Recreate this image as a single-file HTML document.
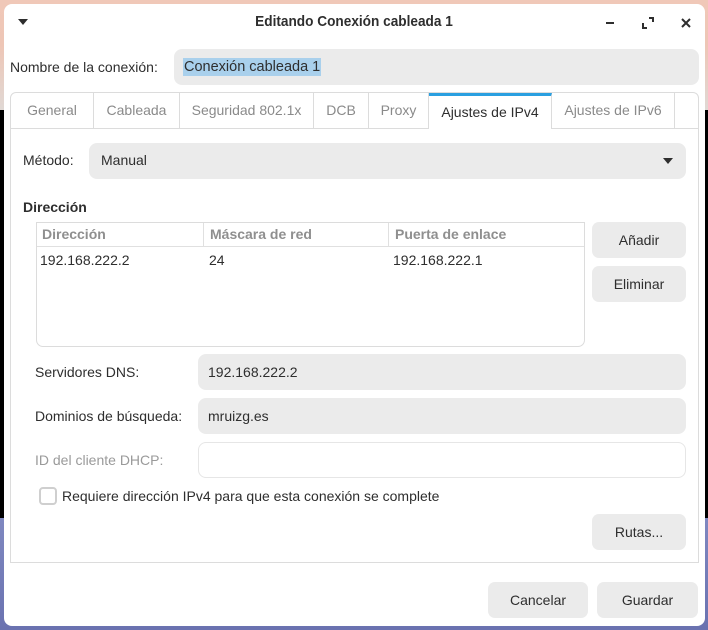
<!DOCTYPE html>
<html><head><meta charset="utf-8"><style>
*{box-sizing:border-box;margin:0;padding:0}
body{width:708px;height:630px;overflow:hidden;position:relative;font-family:"Liberation Sans",sans-serif;font-size:14px;color:#2e2e2e;background:linear-gradient(#f0c8b8 0,#eec6b6 45px,#e0d8d4 110px,#000 110px,#000 518px,#7f88c0 518px,#6a72b0 630px)}
.win{position:absolute;left:4px;top:4px;width:701px;height:622px;background:#fff;border-radius:8px}
.a{position:absolute}
.field{position:absolute;background:#ebebeb;border-radius:8px}
.btn{position:absolute;background:#ebebeb;border-radius:7px;text-align:center;color:#2e2e2e}
.tab{position:absolute;top:93px;height:36px;line-height:35px;text-align:center;color:#8a8a8a;border-right:1px solid #dcdcdc;border-bottom:1px solid #dcdcdc}
</style></head><body>
<div class="win"></div>
<div class="a" style="left:18px;top:19px;width:0;height:0;border-left:5px solid transparent;border-right:5px solid transparent;border-top:6px solid #2e2e2e"></div>
<div class="a" style="left:0;width:708px;top:14px;text-align:center;font-weight:bold;font-size:14.5px;color:#2e2e2e;transform:scaleX(.94)">Editando Conexión cableada 1</div>
<div class="a" style="left:606px;top:22px;width:8px;height:2px;background:#2e2e2e"></div>
<svg class="a" style="left:642px;top:17px" width="12" height="12"><path d="M1 6V11H5M7 1H11V5" stroke="#2e2e2e" stroke-width="2" fill="none"/></svg>
<svg class="a" style="left:681px;top:18px" width="10" height="10"><path d="M1 1L9 9M9 1L1 9" stroke="#2e2e2e" stroke-width="2"/></svg>
<div class="a" style="left:10px;top:59px">Nombre de la conexión:</div>
<div class="field" style="left:174px;top:49px;width:525px;height:36px"></div>
<div class="a" style="left:183px;top:58px;background:#a9d0ec;padding:0 1px;line-height:18px;font-size:14.5px">Conexión cableada 1</div>
<div class="a" style="left:10px;top:92px;width:689px;height:471px;border:1px solid #dcdcdc;border-radius:6px 6px 0 0"></div>
<div class="tab" style="left:11px;width:83px">General</div>
<div class="tab" style="left:94px;width:86px">Cableada</div>
<div class="tab" style="left:180px;width:134px">Seguridad 802.1x</div>
<div class="tab" style="left:314px;width:55px">DCB</div>
<div class="tab" style="left:369px;width:60px">Proxy</div>
<div class="tab" style="left:429px;width:123px;color:#2e2e2e;border-bottom:none;border-top:3px solid #2a9fe0;line-height:32px">Ajustes de IPv4</div>
<div class="tab" style="left:552px;width:123px">Ajustes de IPv6</div>
<div class="a" style="left:675px;top:128px;width:23px;height:1px;background:#dcdcdc"></div>
<div class="a" style="left:11px;top:128px;width:418px;height:1px;background:#dcdcdc"></div>
<div class="a" style="left:23px;top:152px">Método:</div>
<div class="field" style="left:89px;top:143px;width:597px;height:36px"></div>
<div class="a" style="left:101px;top:152px">Manual</div>
<div class="a" style="left:663px;top:158px;border-left:5px solid transparent;border-right:5px solid transparent;border-top:6px solid #2e2e2e"></div>
<div class="a" style="left:23px;top:199px;font-weight:bold">Dirección</div>
<div class="a" style="left:36px;top:222px;width:549px;height:125px;border:1px solid #dcdcdc;border-radius:0 0 7px 7px"></div>
<div class="a" style="left:37px;top:246px;width:547px;height:1px;background:#e0e0e0"></div>
<div class="a" style="left:203px;top:223px;width:1px;height:23px;background:#e0e0e0"></div>
<div class="a" style="left:388px;top:223px;width:1px;height:23px;background:#e0e0e0"></div>
<div class="a" style="left:42px;top:226px;font-weight:bold;color:#8f8f8f">Dirección</div>
<div class="a" style="left:210px;top:226px;font-weight:bold;color:#8f8f8f">Máscara de red</div>
<div class="a" style="left:395px;top:226px;font-weight:bold;color:#8f8f8f">Puerta de enlace</div>
<div class="a" style="left:40px;top:252px">192.168.222.2</div>
<div class="a" style="left:209px;top:252px">24</div>
<div class="a" style="left:393px;top:252px">192.168.222.1</div>
<div class="btn" style="left:592px;top:222px;width:94px;height:36px;line-height:36px">Añadir</div>
<div class="btn" style="left:592px;top:266px;width:94px;height:36px;line-height:36px">Eliminar</div>
<div class="a" style="left:35px;top:364px">Servidores DNS:</div>
<div class="field" style="left:198px;top:354px;width:488px;height:36px"></div>
<div class="a" style="left:208px;top:364px">192.168.222.2</div>
<div class="a" style="left:35px;top:408px">Dominios de búsqueda:</div>
<div class="field" style="left:198px;top:398px;width:488px;height:36px"></div>
<div class="a" style="left:208px;top:408px">mruizg.es</div>
<div class="a" style="left:35px;top:452px;color:#9a9a9a">ID del cliente DHCP:</div>
<div class="a" style="left:198px;top:442px;width:488px;height:36px;border:1px solid #e6e6e6;border-radius:8px"></div>
<div class="a" style="left:39px;top:487px;width:18px;height:18px;border:2px solid #cfcfcf;border-radius:4px"></div>
<div class="a" style="left:62px;top:488px">Requiere dirección IPv4 para que esta conexión se complete</div>
<div class="btn" style="left:592px;top:514px;width:94px;height:36px;line-height:36px">Rutas...</div>
<div class="btn" style="left:488px;top:582px;width:100px;height:36px;line-height:36px">Cancelar</div>
<div class="btn" style="left:597px;top:582px;width:101px;height:36px;line-height:36px">Guardar</div>
</body></html>
